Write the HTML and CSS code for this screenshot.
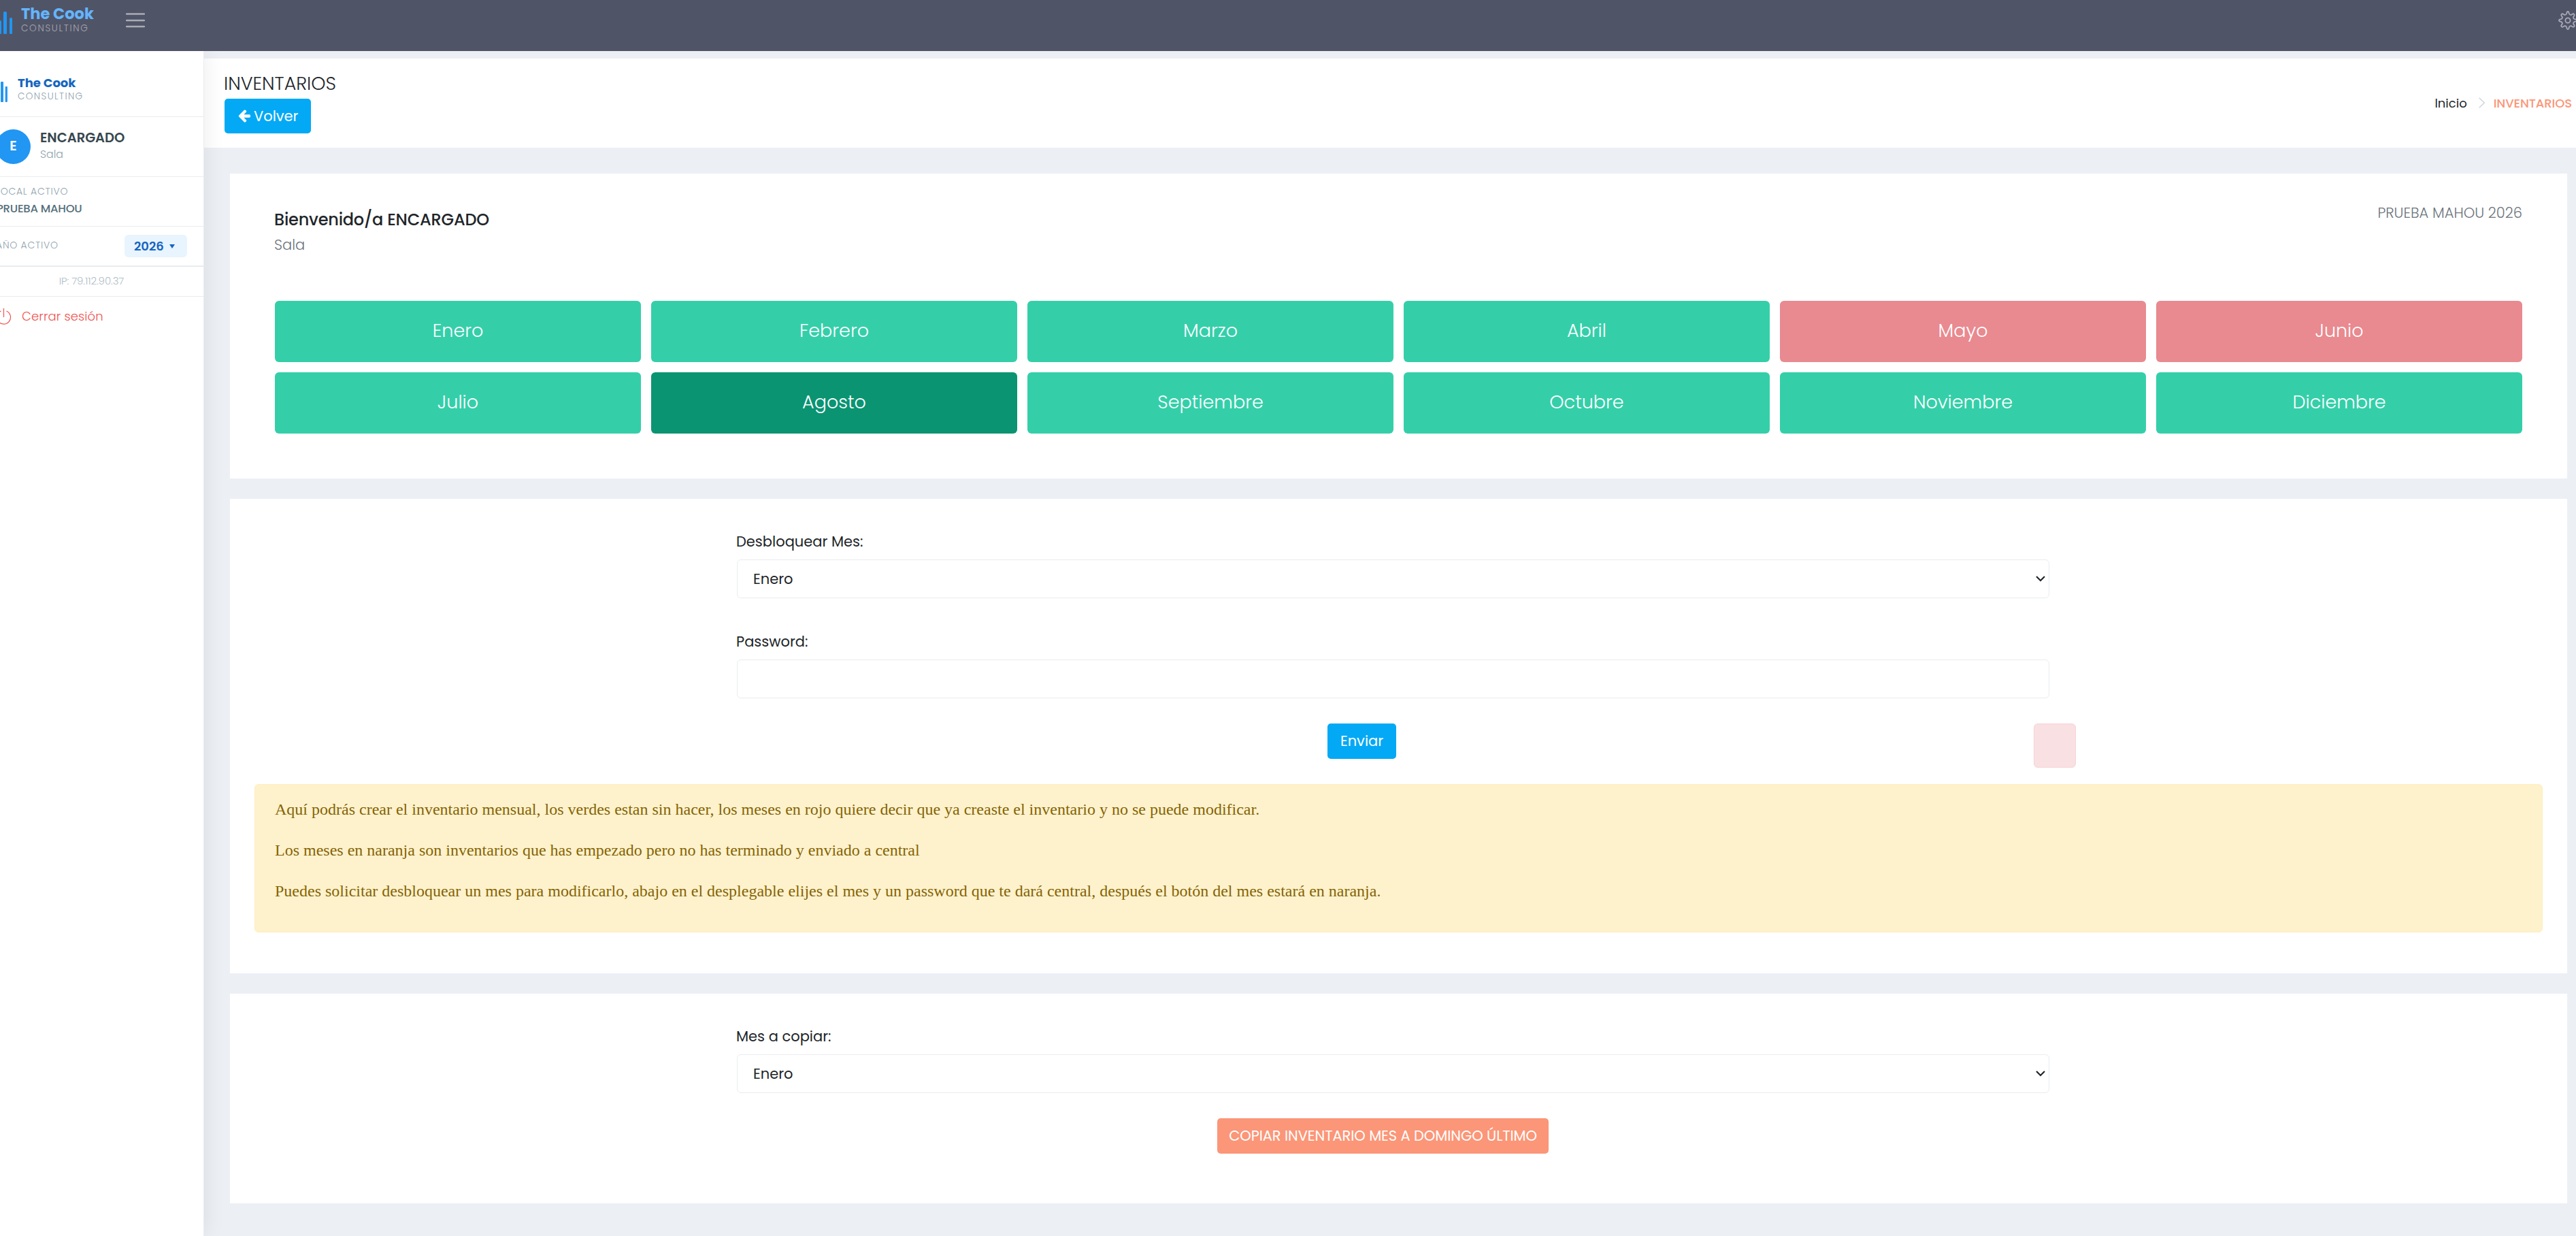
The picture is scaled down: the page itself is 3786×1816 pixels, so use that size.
FILE: index.html
```
<!DOCTYPE html>
<html lang="es">
<head>
  <meta charset="UTF-8" />
  <meta name="viewport" content="width=device-width, initial-scale=1.0" />
  <title>Inventarios - The Cook Consulting</title>
  <link rel="stylesheet" href="styles.css">
</head>
<body>
  <header class="topbar">
    <div class="brand">
      <svg class="brand-bars" width="18" height="33" viewBox="0 0 18 33">
        <rect x="-3" y="13" width="5" height="20" rx="1.5" />
        <rect x="5" y="0" width="5" height="33" rx="1.5" />
        <rect x="14" y="9" width="4" height="24" rx="1.5" />
      </svg>
      <div class="brand-text">
        <span class="brand-name">The Cook</span>
        <span class="brand-sub">CONSULTING</span>
      </div>
    </div>
    <svg class="menu-icon" width="28" height="24" viewBox="0 0 28 24">
      <path d="M1 2.5h26M1 12h26M1 21h26" />
    </svg>
    <svg class="gear-icon" width="28" height="28" viewBox="-14 -14 28 28">
      <path d="M-1.8 -10 Q-1.5 -13 0 -13 Q1.5 -13 1.8 -10 Q2.8 -7.6 5.2 -8.2 Q7.8 -10.6 9.2 -9.2 Q10.6 -7.8 8.2 -5.2 Q7.6 -2.8 10 -1.8 Q13 -1.5 13 0 Q13 1.5 10 1.8 Q7.6 2.8 8.2 5.2 Q10.6 7.8 9.2 9.2 Q7.8 10.6 5.2 8.2 Q2.8 7.6 1.8 10 Q1.5 13 0 13 Q-1.5 13 -1.8 10 Q-2.8 7.6 -5.2 8.2 Q-7.8 10.6 -9.2 9.2 Q-10.6 7.8 -8.2 5.2 Q-7.6 2.8 -10 1.8 Q-13 1.5 -13 0 Q-13 -1.5 -10 -1.8 Q-7.6 -2.8 -8.2 -5.2 Q-10.6 -7.8 -9.2 -9.2 Q-7.8 -10.6 -5.2 -8.2 Q-2.8 -7.6 -1.8 -10 Z" />
      <circle cx="0" cy="0" r="3.6" />
    </svg>
  </header>

  <div class="wrapper">
    <aside class="sidebar">
      <div class="side-logo">
        <svg class="side-bars" width="11" height="30" viewBox="0 0 11 30">
          <rect x="1" y="0" width="4" height="30" rx="1" />
          <rect x="7.7" y="7" width="3.2" height="23" rx="1" />
        </svg>
        <div class="side-logo-text">
          <span class="side-name">The Cook</span>
          <span class="side-sub">CONSULTING</span>
        </div>
      </div>
      <div class="side-user">
        <div class="avatar">E</div>
        <div>
          <div class="user-name">ENCARGADO</div>
          <div class="user-role">Sala</div>
        </div>
      </div>
      <div class="side-local">
        <div class="side-label">LOCAL ACTIVO</div>
        <div class="local-name">PRUEBA MAHOU</div>
      </div>
      <div class="side-year">
        <span class="side-label">AÑO ACTIVO</span>
        <span class="year-badge">2026
          <svg width="8" height="6" viewBox="0 0 8 6"><path d="M0 0h8L4 6z" /></svg>
        </span>
      </div>
      <div class="side-ip">IP: 79.112.90.37</div>
      <a class="logout" href="#">
        <svg width="23" height="25" viewBox="0 0 23 25">
          <path d="M6.5 5A10 10 0 1 0 14.500 5M10.500 1v13" />
        </svg>
        Cerrar sesión
      </a>
    </aside>

    <main class="page">
      <div class="page-title">
        <div>
          <h3>INVENTARIOS</h3>
          <a class="btn btn-info btn-back" href="#">
            <svg width="18" height="19" viewBox="0 -100 1536 1600"><path d="M1536 640v128q0 53-32.500 90.500t-84.500 37.500h-704l293 294q38 36 38 90t-38 90l-75 76q-37 37-90 37-52 0-91-37l-651-652q-37-37-37-90 0-52 37-91l651-650q38-38 91-38 52 0 90 38l75 74q38 38 38 91t-38 91l-293 293h704q52 0 84.500 37.500t32.500 90.500z" /></svg>
            <span>Volver</span>
          </a>
        </div>
        <div class="breadcrumb">
          <a href="#">Inicio</a>
          <svg width="9" height="16" viewBox="0 0 9 16"><path d="M.7 .7L8.200 8L.7 15.300" /></svg>
          <span>INVENTARIOS</span>
        </div>
      </div>

      <section class="card card-months">
        <div class="card-head">
          <div>
            <h4>Bienvenido/a ENCARGADO</h4>
            <h6>Sala</h6>
          </div>
          <div class="card-local">PRUEBA MAHOU 2026</div>
        </div>
        <div class="months">
          <a class="month" href="#">Enero</a>
          <a class="month" href="#">Febrero</a>
          <a class="month" href="#">Marzo</a>
          <a class="month" href="#">Abril</a>
          <a class="month closed" href="#">Mayo</a>
          <a class="month closed" href="#">Junio</a>
          <a class="month" href="#">Julio</a>
          <a class="month current" href="#">Agosto</a>
          <a class="month" href="#">Septiembre</a>
          <a class="month" href="#">Octubre</a>
          <a class="month" href="#">Noviembre</a>
          <a class="month" href="#">Diciembre</a>
        </div>
      </section>

      <section class="card card-unlock">
        <form class="form">
          <label for="mes">Desbloquear Mes:</label>
          <div class="select">
            <select id="mes"><option>Enero</option></select>
            <svg width="14" height="9" viewBox="0 0 14 9"><path d="M1 1l6 6l6-6" /></svg>
          </div>
          <label class="label-pass" for="pass">Password:</label>
          <input type="password" id="pass" />
          <div class="form-actions">
            <button type="button" class="btn btn-info btn-send">Enviar</button>
            <div class="alert-danger"></div>
          </div>
        </form>
        <div class="alert">
          <p>Aquí podrás crear el inventario mensual, los verdes estan sin hacer, los meses en rojo quiere decir que ya creaste el inventario y no se puede modificar.</p>
          <p>Los meses en naranja son inventarios que has empezado pero no has terminado y enviado a central</p>
          <p>Puedes solicitar desbloquear un mes para modificarlo, abajo en el desplegable elijes el mes y un password que te dará central, después el botón del mes estará en naranja.</p>
        </div>
      </section>

      <section class="card card-copy">
        <form class="form">
          <label for="copiar">Mes a copiar:</label>
          <div class="select">
            <select id="copiar"><option>Enero</option></select>
            <svg width="14" height="9" viewBox="0 0 14 9"><path d="M1 1l6 6l6-6" /></svg>
          </div>
          <button type="button" class="btn btn-copy">COPIAR INVENTARIO MES A DOMINGO ÚLTIMO</button>
        </form>
      </section>
    </main>
  </div>
</body>
</html>
```
FILE: styles.css
```
* {
  box-sizing: border-box;
}

body {
  margin: 0;
  height: 1816px;
  overflow: hidden;
  font-family: Poppins, Inter, "Liberation Sans", sans-serif;
  background-color: #ecf0f5;
  color: #212529;
}

h3, h4, h6, p {
  margin: 0;
}

a {
  text-decoration: none;
}

svg {
  display: block;
  flex: none;
  fill: none;
}

/* top bar */
.topbar {
  display: flex;
  align-items: flex-start;
  height: 75px;
  background-color: #505467;
}

.brand {
  display: flex;
  width: 185px;
}

.brand-bars {
  margin-top: 17px;
  fill: #2196f3;
}

.brand-text {
  margin: 8px 0 0 13px;
}

.brand-name,
.brand-sub,
.side-name,
.side-sub {
  display: block;
  white-space: nowrap;
}

.brand-name {
  font-size: 22.5px;
  line-height: 24px;
  font-weight: 700;
  color: #64b5ff;
}

.brand-sub {
  font-size: 13.5px;
  line-height: 19px;
  font-weight: 300;
  letter-spacing: 1.7px;
  color: #a5a7b0;
}

.menu-icon {
  margin-top: 18px;
  stroke: #a9abb5;
  stroke-width: 2.4;
  stroke-linecap: round;
}

.gear-icon {
  margin: 16px -2px 0 auto;
  stroke: #a9abb5;
  stroke-width: 1.8;
}

.wrapper {
  display: flex;
  height: 1741px;
}

/* sidebar */
.sidebar {
  position: relative;
  z-index: 1;
  flex: none;
  width: 300px;
  background-color: #fff;
  border-right: 1px solid #e9ecef;
  box-shadow: 1px 0 30px rgba(0, 0, 0, 0.08);
  clip-path: inset(0 -60px 0 0);
}

.side-logo {
  display: flex;
  height: 97px;
  border-bottom: 1px solid #e9ecef;
}

.side-bars {
  margin-top: 45px;
  fill: #2196f3;
}

.side-logo-text {
  margin: 36px 0 0 15px;
}

.side-name {
  font-size: 18px;
  line-height: 21px;
  font-weight: 700;
  color: #1565c0;
}

.side-sub {
  font-size: 13.5px;
  line-height: 20px;
  font-weight: 300;
  letter-spacing: 1.4px;
  color: #90a4ae;
}

.side-user {
  display: flex;
  height: 88px;
  padding-top: 18px;
  border-bottom: 1px solid #e9ecef;
}

.avatar {
  width: 51px;
  height: 51px;
  margin: 0 14px 0 -6px;
  border-radius: 50%;
  background-color: #2196f3;
  color: #fff;
  font-size: 19.5px;
  line-height: 50px;
  font-weight: 600;
  text-align: center;
}

.user-name {
  font-size: 19.5px;
  line-height: 26px;
  font-weight: 600;
  color: #37474f;
}

.user-role {
  font-size: 15.75px;
  line-height: 21px;
  font-weight: 300;
  color: #90a4ae;
}

.side-local {
  height: 73px;
  padding: 11px 0 0;
  margin-left: -6px;
  border-bottom: 1px solid #e9ecef;
}

.side-label {
  font-size: 14px;
  line-height: 20px;
  font-weight: 300;
  letter-spacing: 0.75px;
  color: #90a4ae;
}

.local-name {
  padding-left: 1px;
  font-size: 16.5px;
  line-height: 31px;
  font-weight: 500;
  letter-spacing: -0.25px;
  color: #546e7a;
}

.side-year {
  display: flex;
  justify-content: space-between;
  height: 59px;
  margin-left: -6px;
  padding: 12px 24px 0 0;
  border-bottom: 2px solid #e9ecef;
}

.side-year .side-label {
  line-height: 31px;
}

.year-badge {
  display: flex;
  align-items: center;
  gap: 8px;
  width: 92px;
  height: 33px;
  padding-left: 14px;
  border-radius: 6px;
  background-color: #e8f4fe;
  color: #1565c0;
  font-size: 18px;
  font-weight: 600;
}

.year-badge svg {
  fill: #1565c0;
}

.side-ip {
  height: 44px;
  margin-left: -30px;
  border-bottom: 1px solid #e9ecef;
  font-size: 15px;
  line-height: 41px;
  font-weight: 300;
  letter-spacing: -0.1px;
  text-align: center;
  color: #b0bec5;
}

.logout {
  display: flex;
  gap: 14px;
  margin: 16px 0 0 -5px;
  font-size: 18px;
  line-height: 26px;
  font-weight: 300;
  letter-spacing: 0.1px;
  color: #ef5350;
}

.logout svg {
  stroke: #ef5350;
  stroke-width: 1.2;
}

/* page title */
.page {
  flex: 1;
  padding-top: 11px;
}

.page-title {
  display: flex;
  justify-content: space-between;
  height: 131px;
  padding: 22px 6px 0 30px;
  background-color: #fff;
}

.page-title h3 {
  height: 37px;
  margin-left: -1px;
  font-size: 27px;
  line-height: 29px;
  font-weight: 300;
}

.btn {
  display: block;
  height: 52px;
  border: none;
  border-radius: 5px;
  color: #fff;
  font-family: inherit;
  font-size: 21px;
  line-height: 52px;
  font-weight: 400;
  padding: 0;
  text-align: center;
}

.btn-info {
  background-color: #03a9f5;
}

.btn-back {
  display: flex;
  align-items: center;
  gap: 5px;
  width: 127px;
  height: 51px;
  padding-left: 20px;
}

.btn-back svg {
  fill: #fff;
}

.breadcrumb {
  display: flex;
  align-items: center;
  height: 87px;
  font-size: 18px;
}

.breadcrumb a {
  color: #212529;
  font-weight: 400;
}

.breadcrumb svg {
  margin: 0 13px 2px 17px;
  stroke: #ced4da;
  stroke-width: 1.4;
}

.breadcrumb span {
  color: #fb9678;
  font-weight: 500;
  letter-spacing: -0.1px;
}

/* cards */
.card {
  margin: 0 13px 30px 38px;
  background-color: #fff;
}

.card-months {
  height: 448px;
  margin-top: 38px;
  padding: 50px 66px 0;
}

.card-head {
  display: flex;
  justify-content: space-between;
  height: 137px;
}

.card-head h4 {
  margin-left: -1px;
  font-size: 24px;
  line-height: 35px;
  font-weight: 500;
  letter-spacing: -0.2px;
}

.card-head h6 {
  margin-left: -1px;
  font-size: 21px;
  line-height: 39px;
  font-weight: 300;
  color: #6c757d;
}

.card-local {
  font-size: 21px;
  line-height: 15px;
  font-weight: 300;
  color: #6c757d;
}

.months {
  display: grid;
  grid-template-columns: repeat(6, 1fr);
  gap: 15px;
}

.month {
  height: 90px;
  border-radius: 6px;
  background-color: #34cfa9;
  color: #fff;
  font-size: 27px;
  line-height: 88px;
  font-weight: 300;
  text-align: center;
}

.month.closed {
  background-color: #e98990;
}

.month.current {
  background-color: #0b9472;
}

/* forms */
.card-unlock {
  height: 697px;
  padding: 49px 36px 0;
}

.card-copy {
  height: 308px;
  padding: 49px 36px 0;
}

.form {
  width: 1929px;
  margin-left: 709px;
}

.form label {
  display: block;
  height: 40px;
  margin-left: -1px;
  font-size: 21px;
  line-height: 27px;
}

.form .label-pass {
  margin-top: 50px;
}

.select {
  position: relative;
}

.select select,
.form input {
  display: block;
  width: 100%;
  height: 57px;
  padding: 0 23px;
  border: 1px solid #e9ecef;
  border-radius: 6px;
  background-color: #fff;
  color: #212529;
  font-family: inherit;
  font-size: 21px;
  appearance: none;
}

.select svg {
  position: absolute;
  right: 6px;
  top: 24px;
  stroke: #212529;
  stroke-width: 2.2;
}

.form-actions {
  display: flex;
  height: 89px;
  margin-top: 37px;
}

.btn-send {
  flex: none;
  width: 101px;
  margin-left: 868px;
  padding-bottom: 2px;
}

.alert-danger {
  flex: none;
  width: 62px;
  height: 65px;
  margin-left: 937px;
  border: 1px solid #f8d3d7;
  border-radius: 6px;
  background-color: #f9e0e3;
}

.alert {
  height: 218px;
  padding: 18px 29px;
  border: 1px solid #ffeeba;
  border-radius: 6px;
  background-color: #fef2cd;
  color: #856404;
  font-family: "Liberation Serif", "Times New Roman", serif;
  font-size: 24px;
  line-height: 36px;
}

.alert p {
  margin-bottom: 24px;
}

.btn-copy {
  width: 487px;
  margin: 37px 0 0 706px;
  padding-bottom: 2px;
  background-color: #fb9678;
  letter-spacing: -0.1px;
}
```
